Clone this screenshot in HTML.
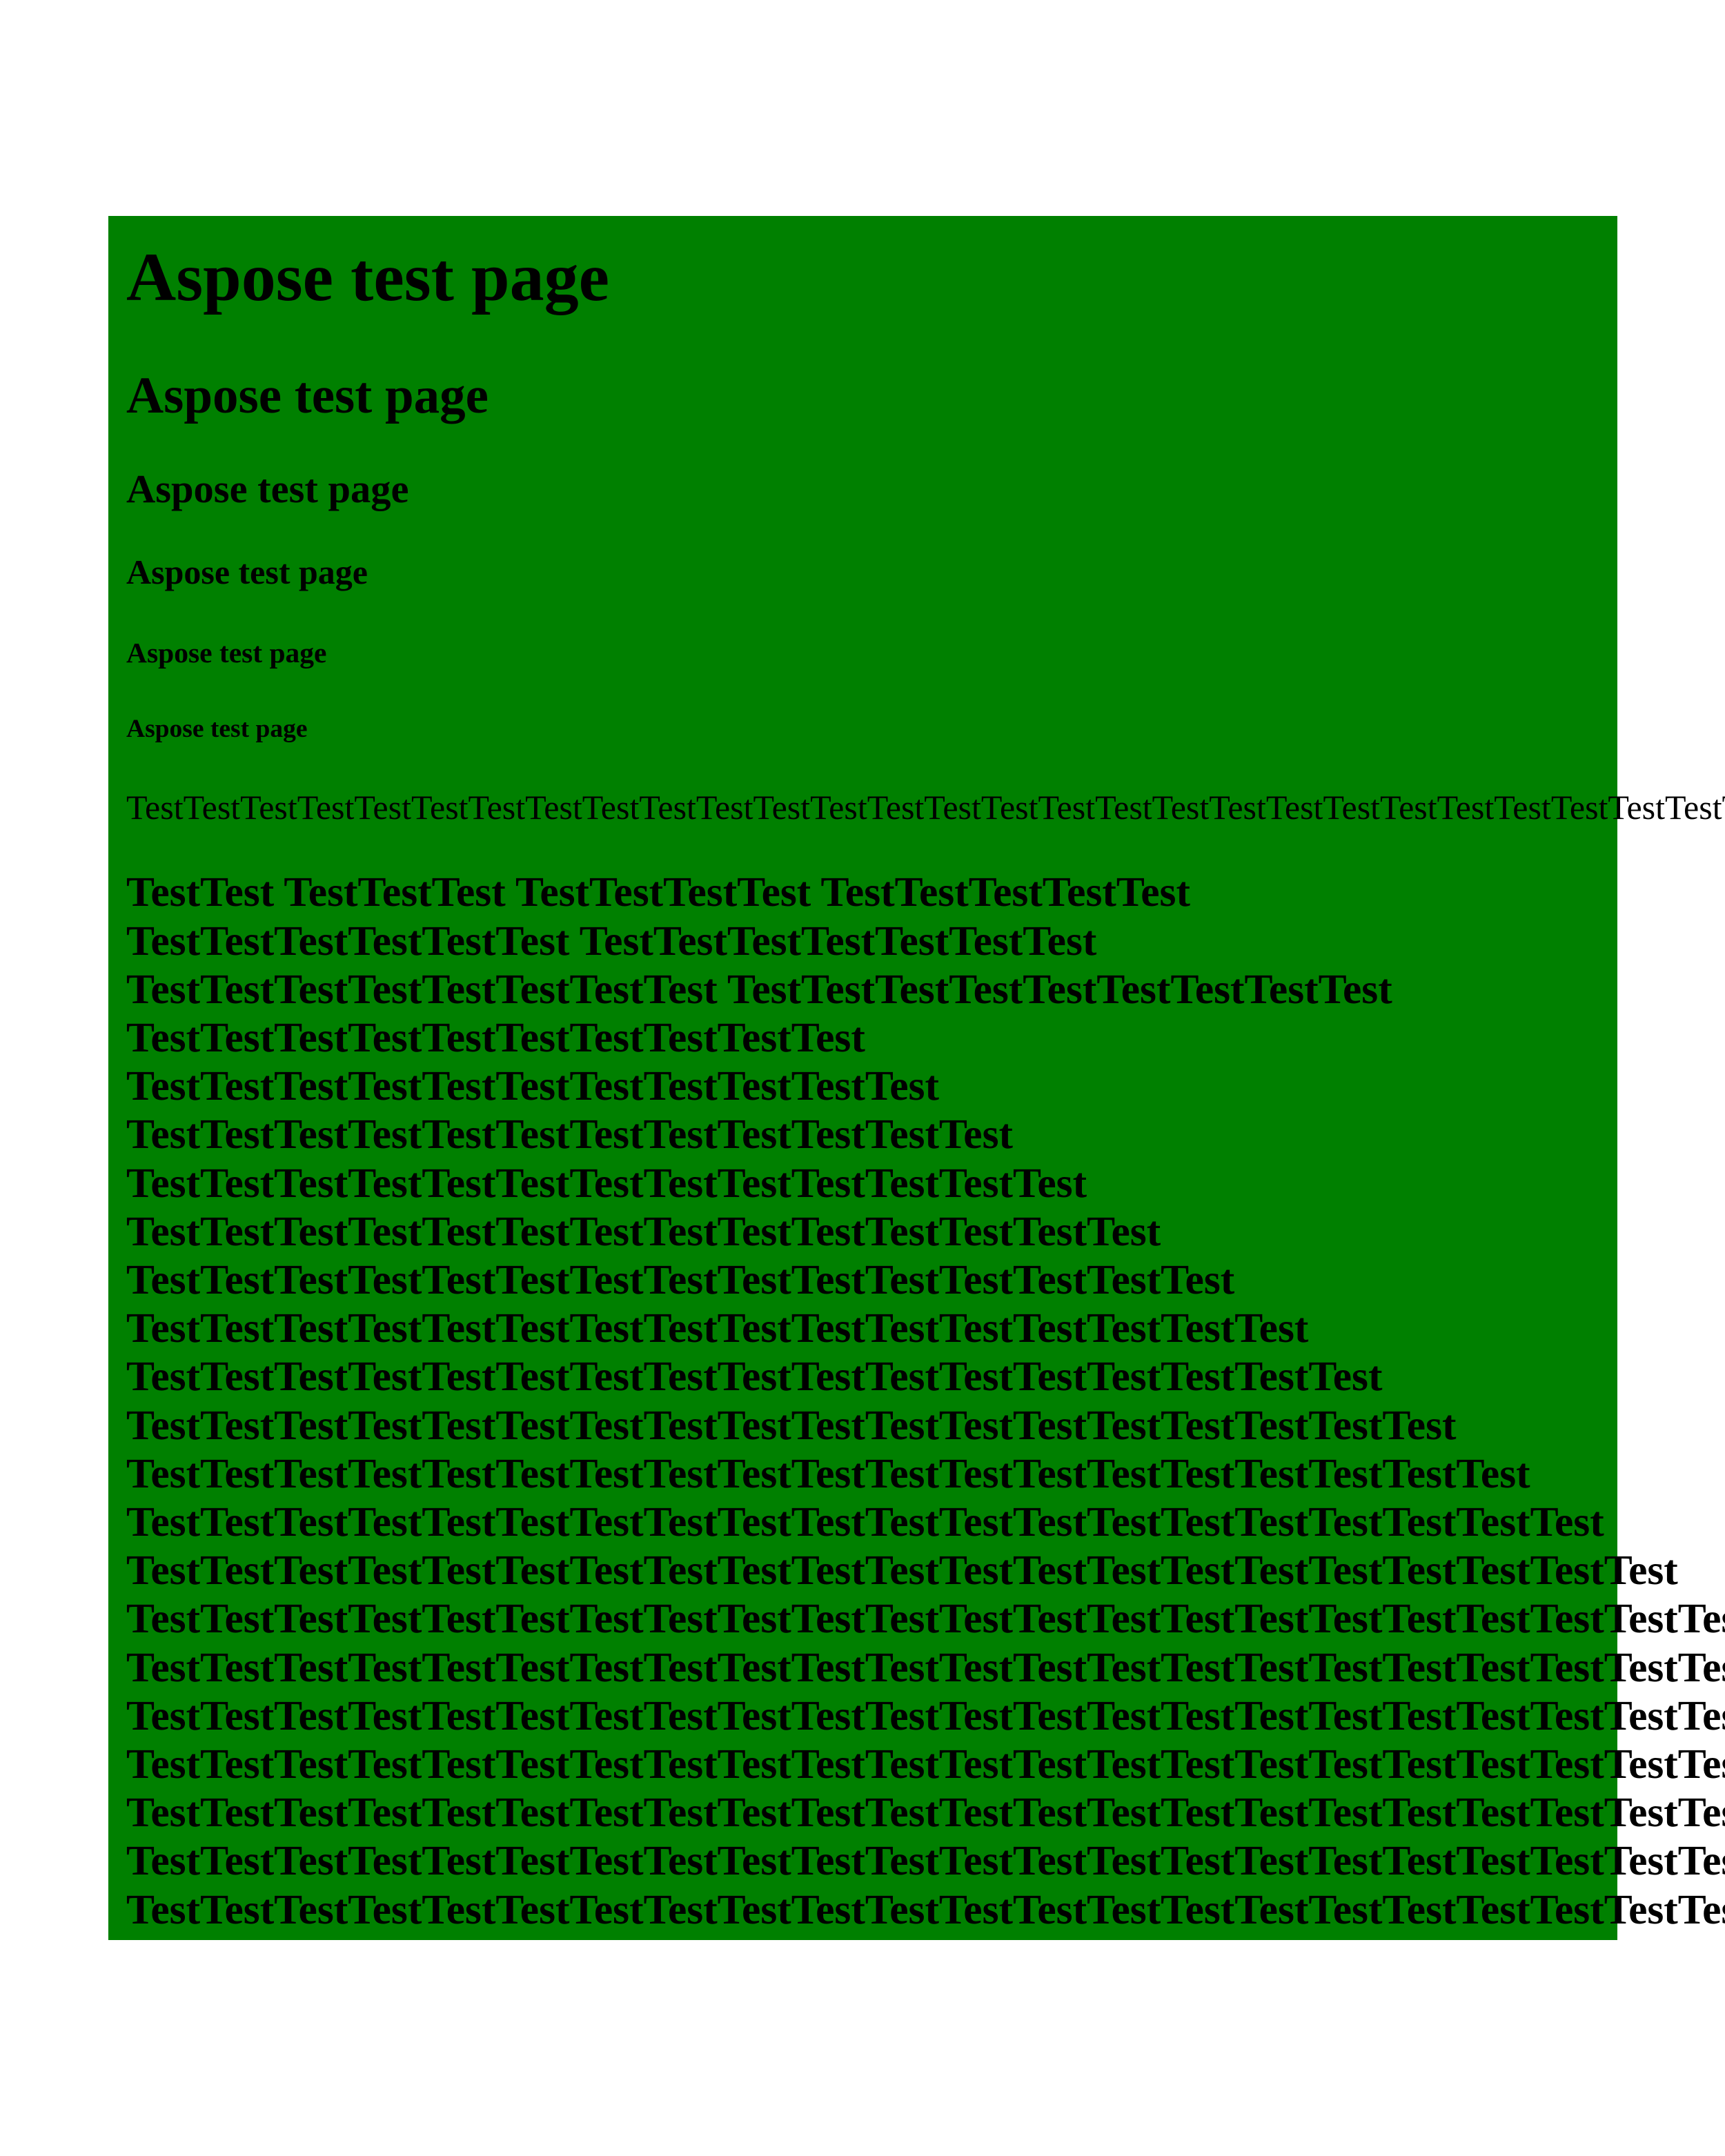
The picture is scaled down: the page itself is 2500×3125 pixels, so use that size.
<!DOCTYPE html>
<html><head><meta charset="utf-8"><style>
html,body{margin:0;padding:0;background:#fff;width:2500px;height:3125px;overflow:hidden;position:relative}
.box{position:absolute;left:157px;top:313px;width:2187px;height:2499px;background:#008000}
.t{position:absolute;left:183px;line-height:0;white-space:nowrap;font-family:"Liberation Serif","Times New Roman",serif;color:#000;font-weight:bold}
.n{font-weight:normal}
</style></head><body>
<div class="box"></div>
<div class="t" style="font-size:100px;top:402px">Aspose test page</div>
<div class="t" style="font-size:75px;top:574px">Aspose test page</div>
<div class="t" style="font-size:58.5px;top:709px">Aspose test page</div>
<div class="t" style="font-size:50px;top:829px">Aspose test page</div>
<div class="t" style="font-size:41.5px;top:946px">Aspose test page</div>
<div class="t" style="font-size:37.5px;top:1057px">Aspose test page</div>
<div class="t n" style="font-size:50px;top:1170px">TestTestTestTestTestTestTestTestTestTestTestTestTestTestTestTestTestTestTestTestTestTestTestTestTestTestTestTestTestTestTestTestTestTest</div>
<div id="b"></div>
<script>
var lines=["TestTest TestTestTest TestTestTestTest TestTestTestTestTest","TestTestTestTestTestTest TestTestTestTestTestTestTest","TestTestTestTestTestTestTestTest TestTestTestTestTestTestTestTestTest"];
for(var n=4;n<=22;n++){lines.push(Array(n+7).join("Test"));}
var h="";
for(var i=0;i<lines.length;i++){var base=1314+70.2*i;h+='<div class="t" style="font-size:61.5px;top:'+(base-20.7)+'px">'+lines[i]+'</div>';}
document.getElementById("b").outerHTML=h;
</script>
</body></html>
